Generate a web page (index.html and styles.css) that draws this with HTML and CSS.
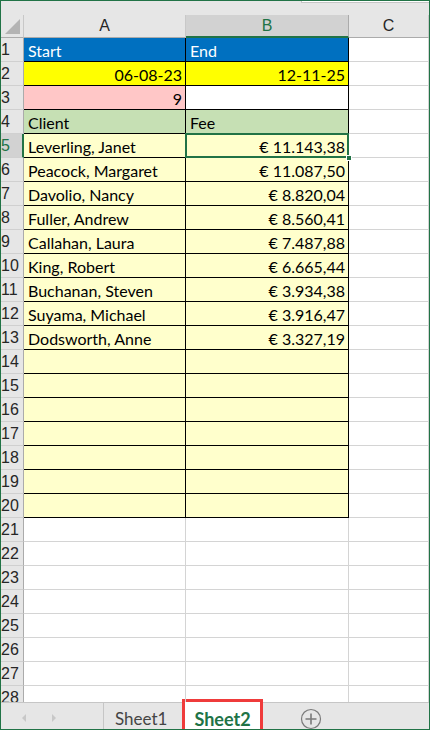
FILE: index.html
```html
<!DOCTYPE html>
<html>
<head>
<meta charset="utf-8">
<link rel="stylesheet" href="styles.css">
</head>
<body>
<div class="app">
  <div class="topstrip"><div class="namebox"></div></div>
  <div class="sheet">
    <div class="row head">
      <div class="corner"><span class="tri"></span></div>
      <div class="ch">A</div>
      <div class="ch sel">B</div>
      <div class="ch">C</div>
      <div class="ch end"></div>
    </div>
    <div class="row"><div class="rh">1</div><div class="c bd blue">Start</div><div class="c bd blue">End</div><div class="c"></div><div class="c end"></div></div>
    <div class="row"><div class="rh">2</div><div class="c bd yel r">06-08-23</div><div class="c bd yel r">12-11-25</div><div class="c"></div><div class="c end"></div></div>
    <div class="row"><div class="rh">3</div><div class="c bd pink r">9</div><div class="c bd"></div><div class="c"></div><div class="c end"></div></div>
    <div class="row"><div class="rh">4</div><div class="c bd grn">Client</div><div class="c bd grn">Fee</div><div class="c"></div><div class="c end"></div></div>
    <div class="row"><div class="rh rsel">5</div><div class="c bd ly">Leverling, Janet</div><div class="c bd ly r active">€ 11.143,38<span class="handle"></span></div><div class="c"></div><div class="c end"></div></div>
    <div class="row"><div class="rh">6</div><div class="c bd ly">Peacock, Margaret</div><div class="c bd ly r">€ 11.087,50</div><div class="c"></div><div class="c end"></div></div>
    <div class="row"><div class="rh">7</div><div class="c bd ly">Davolio, Nancy</div><div class="c bd ly r">€ 8.820,04</div><div class="c"></div><div class="c end"></div></div>
    <div class="row"><div class="rh">8</div><div class="c bd ly">Fuller, Andrew</div><div class="c bd ly r">€ 8.560,41</div><div class="c"></div><div class="c end"></div></div>
    <div class="row"><div class="rh">9</div><div class="c bd ly">Callahan, Laura</div><div class="c bd ly r">€ 7.487,88</div><div class="c"></div><div class="c end"></div></div>
    <div class="row"><div class="rh">10</div><div class="c bd ly">King, Robert</div><div class="c bd ly r">€ 6.665,44</div><div class="c"></div><div class="c end"></div></div>
    <div class="row"><div class="rh">11</div><div class="c bd ly">Buchanan, Steven</div><div class="c bd ly r">€ 3.934,38</div><div class="c"></div><div class="c end"></div></div>
    <div class="row"><div class="rh">12</div><div class="c bd ly">Suyama, Michael</div><div class="c bd ly r">€ 3.916,47</div><div class="c"></div><div class="c end"></div></div>
    <div class="row"><div class="rh">13</div><div class="c bd ly">Dodsworth, Anne</div><div class="c bd ly r">€ 3.327,19</div><div class="c"></div><div class="c end"></div></div>
    <div class="row"><div class="rh">14</div><div class="c bd ly"></div><div class="c bd ly"></div><div class="c"></div><div class="c end"></div></div>
    <div class="row"><div class="rh">15</div><div class="c bd ly"></div><div class="c bd ly"></div><div class="c"></div><div class="c end"></div></div>
    <div class="row"><div class="rh">16</div><div class="c bd ly"></div><div class="c bd ly"></div><div class="c"></div><div class="c end"></div></div>
    <div class="row"><div class="rh">17</div><div class="c bd ly"></div><div class="c bd ly"></div><div class="c"></div><div class="c end"></div></div>
    <div class="row"><div class="rh">18</div><div class="c bd ly"></div><div class="c bd ly"></div><div class="c"></div><div class="c end"></div></div>
    <div class="row"><div class="rh">19</div><div class="c bd ly"></div><div class="c bd ly"></div><div class="c"></div><div class="c end"></div></div>
    <div class="row"><div class="rh">20</div><div class="c bd ly"></div><div class="c bd ly"></div><div class="c"></div><div class="c end"></div></div>
    <div class="row"><div class="rh">21</div><div class="c"></div><div class="c"></div><div class="c"></div><div class="c end"></div></div>
    <div class="row"><div class="rh">22</div><div class="c"></div><div class="c"></div><div class="c"></div><div class="c end"></div></div>
    <div class="row"><div class="rh">23</div><div class="c"></div><div class="c"></div><div class="c"></div><div class="c end"></div></div>
    <div class="row"><div class="rh">24</div><div class="c"></div><div class="c"></div><div class="c"></div><div class="c end"></div></div>
    <div class="row"><div class="rh">25</div><div class="c"></div><div class="c"></div><div class="c"></div><div class="c end"></div></div>
    <div class="row"><div class="rh">26</div><div class="c"></div><div class="c"></div><div class="c"></div><div class="c end"></div></div>
    <div class="row"><div class="rh">27</div><div class="c"></div><div class="c"></div><div class="c"></div><div class="c end"></div></div>
    <div class="row"><div class="rh">28</div><div class="c"></div><div class="c"></div><div class="c"></div><div class="c end"></div></div>
  </div>
  <div class="tabbar">
    <div class="nav">
      <svg class="arrow" width="8" height="10" viewBox="0 0 8 10"><path d="M6 1 L2 5 L6 9 Z" fill="#c8c8c8"/></svg>
      <svg class="arrow" width="8" height="10" viewBox="0 0 8 10"><path d="M2 1 L6 5 L2 9 Z" fill="#c8c8c8"/></svg>
    </div>
    <div class="tab">Sheet1</div>
    <div class="tab active"><span>Sheet2</span></div>
    <div class="add">
      <svg width="22" height="22" viewBox="0 0 22 22"><circle cx="11" cy="11" r="9.5" fill="none" stroke="#7a7a7a" stroke-width="1.2"/><path d="M11 5.5 V16.5 M5.5 11 H16.5" stroke="#7a7a7a" stroke-width="1.6"/></svg>
    </div>
  </div>
</div>
</body>
</html>
```

FILE: styles.css
```css
* { box-sizing: border-box; }
html, body { margin: 0; padding: 0; }
body {
  width: 430px;
  height: 730px;
  overflow: hidden;
  background: #e6e6e6;
  font-family: "Lato", "Liberation Sans", sans-serif;
  font-size: 16px;
  color: #000;
}
.app { display: flex; flex-direction: column; height: 730px; }
.topstrip {
  height: 15px;
  background: #e6e6e6;
  display: flex;
  justify-content: flex-end;
  flex: none;
}
.namebox {
  width: 129px;
  height: 3px;
  background: #fff;
  border: 1px solid #c6c6c6;
  border-top: none;
  border-right: none;
}
.sheet {
  height: 687px;
  overflow: hidden;
  background: #fff;
  flex: none;
}
.row {
  display: grid;
  grid-template-columns: 24px 162px 163px 80px 1px;
  grid-template-rows: 24px;
  height: 24px;
}
.row.head { height: 23px; grid-template-rows: 23px; background: #e6e6e6; }
.corner {
  position: relative;
  background: #e6e6e6;
  border-right: 1px solid #c8c8c8;
  border-bottom: 1px solid #ababab;
}
.tri {
  position: absolute;
  right: 3px;
  bottom: 3px;
  width: 0;
  height: 0;
  border-left: 15px solid transparent;
  border-bottom: 15px solid #b4b4b4;
}
.ch {
  background: #e6e6e6;
  border-right: 1px solid #c8c8c8;
  border-bottom: 1px solid #ababab;
  text-align: center;
  line-height: 22px;
  color: #262626;
  font-family: "Liberation Sans", sans-serif;
  font-size: 16px;
}
.ch.sel {
  background: #d2d2d2;
  color: #217346;
  border-bottom: 2px solid #217346;
  border-right-color: #ababab;
}
.ch.end { border-right: none; }
.rh {
  background: #e6e6e6;
  border-right: 1px solid #ababab;
  border-bottom: 1px solid #d0d0d0;
  color: #262626;
  font-size: 16px;
  line-height: 23px;
  padding-left: 1px;
  font-family: "Liberation Sans", sans-serif;
  overflow: hidden;
  white-space: nowrap;
}
.rh.rsel {
  background: #d2d2d2;
  color: #217346;
  border-right: 2px solid #217346;
}
.c {
  position: relative;
  border-right: 1px solid #d4d4d4;
  border-bottom: 1px solid #d4d4d4;
  line-height: 23px;
  padding: 1px 4px 0 4px;
  white-space: nowrap;
  min-height: 0;
}
.c.end { border-right: none; padding: 0; }
.c.bd { border-right-color: #000; border-bottom-color: #000; }
.c.r { text-align: right; padding-right: 3px; }
.blue { background: #0070c0; color: #fff; }
.yel { background: #ffff00; }
.pink { background: #ffc7c7; }
.grn { background: #c6e0b4; }
.ly { background: #ffffcc; }
.active::after {
  content: "";
  position: absolute;
  left: -1px;
  top: -1px;
  right: -1px;
  bottom: -1px;
  border: 2px solid #217346;
  pointer-events: none;
}
.handle {
  position: absolute;
  right: -4px;
  bottom: -4px;
  width: 6px;
  height: 6px;
  background: #217346;
  border: 1px solid #fff;
  z-index: 2;
}
.tabbar {
  flex: 1;
  display: flex;
  align-items: stretch;
  background: #e6e6e6;
  border-top: 1px solid #c6c6c6;
}
.nav {
  width: 104px;
  display: flex;
  align-items: center;
  gap: 22px;
  padding-left: 20px;
  border-right: 1px solid #c6c6c6;
}
.tab {
  font-family: "Lato", "Liberation Sans", sans-serif;
  font-size: 17px;
  color: #444;
  display: flex;
  align-items: center;
  padding: 0 14px 0 11px;
}
.tab.active {
  margin-left: 1px;
  margin-top: -4px;
  background: #fff;
  border: 3px solid #ef3b3b;
  border-bottom: none;
  color: #217346;
  font-weight: bold;
  font-size: 18px;
  width: 81px;
  padding: 0 0 0 9px;
}
.tab.active span {
  border-bottom: 2px solid #217346;
  line-height: 24px;
  margin-top: 5px;
}
.add {
  display: flex;
  align-items: center;
  padding-left: 37px;
  padding-top: 2px;
}
```
